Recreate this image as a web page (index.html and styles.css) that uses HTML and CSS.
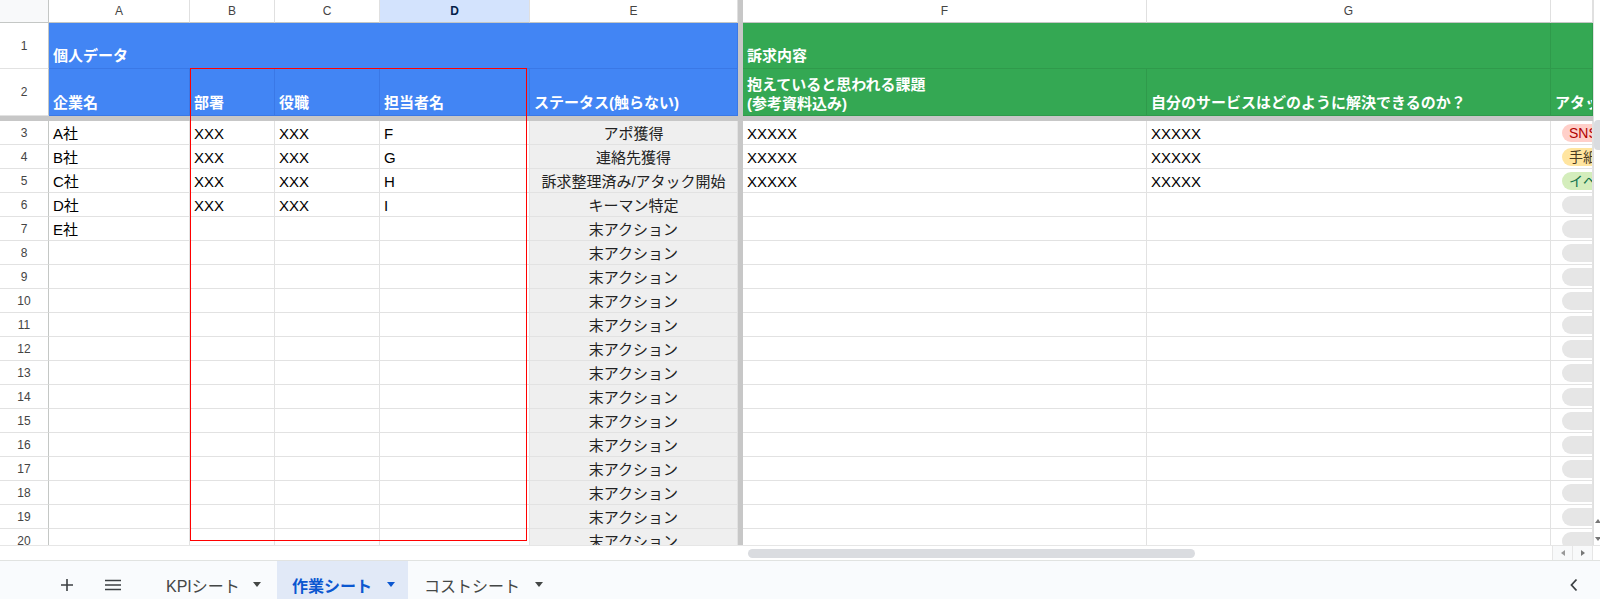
FILE: index.html
```html
<!DOCTYPE html>
<html lang="ja">
<head>
<meta charset="utf-8">
<title>作業シート</title>
<link rel="stylesheet" href="styles.css">
</head>
<body>
<div class="main">
  <div class="sheet">
    <div class="row colhead">
      <div class="c corner"></div>
      <div class="c">A</div><div class="c">B</div><div class="c">C</div>
      <div class="c sel">D</div><div class="c">E</div>
      <div class="c fz"></div>
      <div class="c">F</div><div class="c">G</div><div class="c"></div>
    </div>
    <div class="row r1">
      <div class="c rn">1</div>
      <div class="c blue span5 h1">個人データ</div>
      <div class="c fz"></div>
      <div class="c green span2 h1">訴求内容</div>
      <div class="c green h1"></div>
    </div>
    <div class="row r2">
      <div class="c rn">2</div>
      <div class="c blue">企業名</div>
      <div class="c blue">部署</div>
      <div class="c blue">役職</div>
      <div class="c blue">担当者名</div>
      <div class="c blue">ステータス(触らない)</div>
      <div class="c fz"></div>
      <div class="c green"><span class="ml">抱えていると思われる課題<br>(参考資料込み)</span></div>
      <div class="c green">自分のサービスはどのように解決できるのか？</div>
      <div class="c green">アタックリスト</div>
    </div>
    <div class="hfreeze"></div>

    <div class="row dr"><div class="c rn">3</div><div class="c">A社</div><div class="c">XXX</div><div class="c">XXX</div><div class="c">F</div><div class="c status">アポ獲得</div><div class="c fz"></div><div class="c">XXXXX</div><div class="c">XXXXX</div><div class="c chipcell"><span class="chip red">SNS</span></div></div>
    <div class="row dr"><div class="c rn">4</div><div class="c">B社</div><div class="c">XXX</div><div class="c">XXX</div><div class="c">G</div><div class="c status">連絡先獲得</div><div class="c fz"></div><div class="c">XXXXX</div><div class="c">XXXXX</div><div class="c chipcell"><span class="chip yellow">手紙</span></div></div>
    <div class="row dr"><div class="c rn">5</div><div class="c">C社</div><div class="c">XXX</div><div class="c">XXX</div><div class="c">H</div><div class="c status">訴求整理済み/アタック開始</div><div class="c fz"></div><div class="c">XXXXX</div><div class="c">XXXXX</div><div class="c chipcell"><span class="chip green-chip">イベント</span></div></div>
    <div class="row dr"><div class="c rn">6</div><div class="c">D社</div><div class="c">XXX</div><div class="c">XXX</div><div class="c">I</div><div class="c status">キーマン特定</div><div class="c fz"></div><div class="c"></div><div class="c"></div><div class="c chipcell"><span class="chip"></span></div></div>
    <div class="row dr"><div class="c rn">7</div><div class="c">E社</div><div class="c"></div><div class="c"></div><div class="c"></div><div class="c status">末アクション</div><div class="c fz"></div><div class="c"></div><div class="c"></div><div class="c chipcell"><span class="chip"></span></div></div>
    <div class="row dr"><div class="c rn">8</div><div class="c"></div><div class="c"></div><div class="c"></div><div class="c"></div><div class="c status">末アクション</div><div class="c fz"></div><div class="c"></div><div class="c"></div><div class="c chipcell"><span class="chip"></span></div></div>
    <div class="row dr"><div class="c rn">9</div><div class="c"></div><div class="c"></div><div class="c"></div><div class="c"></div><div class="c status">末アクション</div><div class="c fz"></div><div class="c"></div><div class="c"></div><div class="c chipcell"><span class="chip"></span></div></div>
    <div class="row dr"><div class="c rn">10</div><div class="c"></div><div class="c"></div><div class="c"></div><div class="c"></div><div class="c status">末アクション</div><div class="c fz"></div><div class="c"></div><div class="c"></div><div class="c chipcell"><span class="chip"></span></div></div>
    <div class="row dr"><div class="c rn">11</div><div class="c"></div><div class="c"></div><div class="c"></div><div class="c"></div><div class="c status">末アクション</div><div class="c fz"></div><div class="c"></div><div class="c"></div><div class="c chipcell"><span class="chip"></span></div></div>
    <div class="row dr"><div class="c rn">12</div><div class="c"></div><div class="c"></div><div class="c"></div><div class="c"></div><div class="c status">末アクション</div><div class="c fz"></div><div class="c"></div><div class="c"></div><div class="c chipcell"><span class="chip"></span></div></div>
    <div class="row dr"><div class="c rn">13</div><div class="c"></div><div class="c"></div><div class="c"></div><div class="c"></div><div class="c status">末アクション</div><div class="c fz"></div><div class="c"></div><div class="c"></div><div class="c chipcell"><span class="chip"></span></div></div>
    <div class="row dr"><div class="c rn">14</div><div class="c"></div><div class="c"></div><div class="c"></div><div class="c"></div><div class="c status">末アクション</div><div class="c fz"></div><div class="c"></div><div class="c"></div><div class="c chipcell"><span class="chip"></span></div></div>
    <div class="row dr"><div class="c rn">15</div><div class="c"></div><div class="c"></div><div class="c"></div><div class="c"></div><div class="c status">末アクション</div><div class="c fz"></div><div class="c"></div><div class="c"></div><div class="c chipcell"><span class="chip"></span></div></div>
    <div class="row dr"><div class="c rn">16</div><div class="c"></div><div class="c"></div><div class="c"></div><div class="c"></div><div class="c status">末アクション</div><div class="c fz"></div><div class="c"></div><div class="c"></div><div class="c chipcell"><span class="chip"></span></div></div>
    <div class="row dr"><div class="c rn">17</div><div class="c"></div><div class="c"></div><div class="c"></div><div class="c"></div><div class="c status">末アクション</div><div class="c fz"></div><div class="c"></div><div class="c"></div><div class="c chipcell"><span class="chip"></span></div></div>
    <div class="row dr"><div class="c rn">18</div><div class="c"></div><div class="c"></div><div class="c"></div><div class="c"></div><div class="c status">末アクション</div><div class="c fz"></div><div class="c"></div><div class="c"></div><div class="c chipcell"><span class="chip"></span></div></div>
    <div class="row dr"><div class="c rn">19</div><div class="c"></div><div class="c"></div><div class="c"></div><div class="c"></div><div class="c status">末アクション</div><div class="c fz"></div><div class="c"></div><div class="c"></div><div class="c chipcell"><span class="chip"></span></div></div>
    <div class="row dr"><div class="c rn">20</div><div class="c"></div><div class="c"></div><div class="c"></div><div class="c"></div><div class="c status">末アクション</div><div class="c fz"></div><div class="c"></div><div class="c"></div><div class="c chipcell"><span class="chip"></span></div></div>

    <div class="redbox"></div>
  </div>
  <div class="vscroll">
    <div class="vthumb"></div>
    <div class="varrows">
      <span class="tri-up"></span>
      <span class="tri-down"></span>
    </div>
  </div>
</div>

<div class="hscroll">
  <div class="hleft"></div>
  <div class="htrack"><div class="hthumb"></div></div>
  <div class="harrow"><span class="tri-left"></span></div>
  <div class="harrow"><span class="tri-right"></span></div>
  <div class="hend"></div>
</div>

<div class="tabs">
  <div class="tbtn plus">
    <svg width="14" height="14" viewBox="0 0 14 14"><path d="M7 1v12M1 7h12" stroke="#3c4043" stroke-width="1.6" fill="none"/></svg>
  </div>
  <div class="tbtn menu">
    <svg width="18" height="12" viewBox="0 0 18 12"><path d="M1 1.5h16M1 6h16M1 10.5h16" stroke="#3c4043" stroke-width="1.6" fill="none"/></svg>
  </div>
  <div class="tab t1"><span class="tname">KPIシート</span><span class="caret"></span></div>
  <div class="tab t2 active"><span class="tname">作業シート</span><span class="caret"></span></div>
  <div class="tab t3"><span class="tname">コストシート</span><span class="caret"></span></div>
  <div class="tspacer"></div>
  <div class="tbtn chev">
    <svg width="10" height="14" viewBox="0 0 10 14"><path d="M7.5 1.5L2.5 7l5 5.5" stroke="#3c4043" stroke-width="1.8" fill="none"/></svg>
  </div>
</div>
</body>
</html>
```

FILE: styles.css
```css
html, body {
  margin: 0;
  padding: 0;
}
body {
  width: 1600px;
  height: 599px;
  overflow: hidden;
  background: #fff;
  font-family: "Liberation Sans", "Noto Sans CJK JP", Arial, sans-serif;
}

.main {
  display: flex;
  height: 545px;
  overflow: hidden;
}
.sheet {
  width: 1593px;
  position: relative;
  overflow: hidden;
}
.row {
  display: grid;
  grid-template-columns: 49px 141px 85px 105px 150px 208px 5px 404px 404px 42px;
}
.c {
  box-sizing: border-box;
  border-right: 1px solid #e2e2e2;
  border-bottom: 1px solid #e2e2e2;
  font-size: 15px;
  line-height: 20px;
  padding: 0 4px 1px;
  display: flex;
  align-items: flex-end;
  white-space: nowrap;
  overflow: hidden;
  color: #000;
}

.colhead { height: 23px; }
.colhead .c {
  font-size: 12px;
  color: #444;
  justify-content: center;
  align-items: center;
  padding: 0;
  border-right-color: #e0e0e0;
  border-bottom: 1px solid #c4c7c5;
}
.colhead .corner {
  background: #f8f9fa;
  border-right: 1px solid #c4c7c5;
}
.colhead .sel {
  background: #d3e3fd;
  color: #041e49;
  font-weight: bold;
}

.rn {
  justify-content: center;
  align-items: center;
  padding: 0;
  font-size: 12px;
  color: #444;
  border-right: 1px solid #c4c7c5;
  border-bottom-color: #e2e2e2;
}
.c.fz {
  background: #c7c7c7;
  border: none;
  padding: 0;
}

.r1 { height: 46px; }
.r2 { height: 47px; }
.c.h1 { padding-bottom: 2px; }
.r2 .c { padding-bottom: 2px; }
.r2 .c.rn { padding: 0; }
.ml { display: block; line-height: 19px; }

.blue {
  background: #4285f4;
  color: #fff;
  font-weight: bold;
  border-color: #3a78e6;
}
.green {
  background: #34a853;
  color: #fff;
  font-weight: bold;
  border-color: #2f9a4b;
}
.span5 { grid-column: span 5; }
.span2 { grid-column: span 2; }

.hfreeze {
  height: 5px;
  background: #c7c7c7;
}

.dr { height: 24px; }
.dr .c { padding-bottom: 0; }
.dr .c.rn { padding: 0; }
.status {
  background: #efefef;
  justify-content: center;
  color: #222;
}
.chipcell {
  align-items: center;
  padding: 0 !important;
}
.chip {
  display: block;
  box-sizing: border-box;
  height: 18px;
  width: 60px;
  flex: none;
  margin-left: 11px;
  padding: 0 7px;
  border-radius: 9px;
  font-size: 14px;
  line-height: 18px;
  background: #e6e6e6;
}
.chip.red { background: #ffcfc9; color: #b10202; }
.chip.yellow { background: #ffe5a0; color: #473821; }
.chip.green-chip { background: #d4edbc; color: #11734b; }

.redbox {
  position: absolute;
  left: 190px;
  top: 68px;
  width: 337px;
  height: 473px;
  box-sizing: border-box;
  border: 1.5px solid #ff0000;
  pointer-events: none;
}

.vscroll {
  width: 7px;
  box-sizing: border-box;
  border-left: 1px solid #e0e0e0;
  display: flex;
  flex-direction: column;
  background: #fff;
}
.vthumb {
  margin-top: 120px;
  height: 30px;
  background: #dadce0;
  border-radius: 4px 0 0 4px;
}
.varrows {
  margin-top: auto;
  margin-bottom: 4px;
  display: flex;
  flex-direction: column;
  gap: 14px;
  padding-left: 1px;
}
.tri-up, .tri-down, .tri-left, .tri-right {
  display: block;
  width: 0;
  height: 0;
}
.tri-up {
  border-left: 3px solid transparent;
  border-right: 3px solid transparent;
  border-bottom: 4px solid #777;
}
.tri-down {
  border-left: 3px solid transparent;
  border-right: 3px solid transparent;
  border-top: 4px solid #777;
}
.tri-left {
  border-top: 3px solid transparent;
  border-bottom: 3px solid transparent;
  border-right: 4px solid #999;
}
.tri-right {
  border-top: 3px solid transparent;
  border-bottom: 3px solid transparent;
  border-left: 4px solid #777;
}

.hscroll {
  height: 15px;
  display: flex;
  box-sizing: border-box;
  border-top: 1px solid #e6e6e6;
  background: #fff;
}
.hleft {
  width: 743px;
  flex: none;
}
.htrack {
  flex: 1;
  display: flex;
  align-items: center;
}
.hthumb {
  margin-left: 5px;
  width: 447px;
  height: 9px;
  border-radius: 5px;
  background: #dadce0;
}
.harrow {
  width: 19px;
  flex: none;
  display: flex;
  align-items: center;
  justify-content: center;
  border-left: 1px solid #e6e6e6;
  background: #f8f9fa;
}
.hend {
  width: 7px;
  flex: none;
  border-left: 1px solid #e6e6e6;
}

.tabs {
  height: 48px;
  display: flex;
  align-items: stretch;
  background: #f9fbfd;
  border-top: 1px solid #e1e3e1;
  box-sizing: border-box;
}
.tbtn {
  display: flex;
  align-items: center;
  justify-content: center;
  flex: none;
}
.plus { width: 30px; margin-left: 52px; }
.menu { width: 30px; margin-left: 16px; }
.tab {
  display: flex;
  align-items: center;
  flex: none;
  box-sizing: border-box;
  padding-left: 15px;
  font-size: 16px;
  color: #444746;
}
.t1 { width: 126px; margin-left: 23px; }
.t2 { width: 131px; }
.t3 { width: 150px; padding-left: 16px; }
.tname { white-space: nowrap; }
.caret {
  width: 0;
  height: 0;
  border-left: 4px solid transparent;
  border-right: 4px solid transparent;
  border-top: 5px solid #444746;
  margin-left: auto;
  margin-right: 15px;
}
.t1 .caret { margin-right: 16px; }
.t3 .caret { margin-left: 15px; }
.tab.active {
  background: #e1e9f7;
  color: #0b57d0;
  font-weight: bold;
}
.tab.active .caret {
  border-top-color: #0b57d0;
  margin-right: 13px;
}
.tspacer { flex: 1; }
.chev { width: 30px; margin-right: 11px; }
```
